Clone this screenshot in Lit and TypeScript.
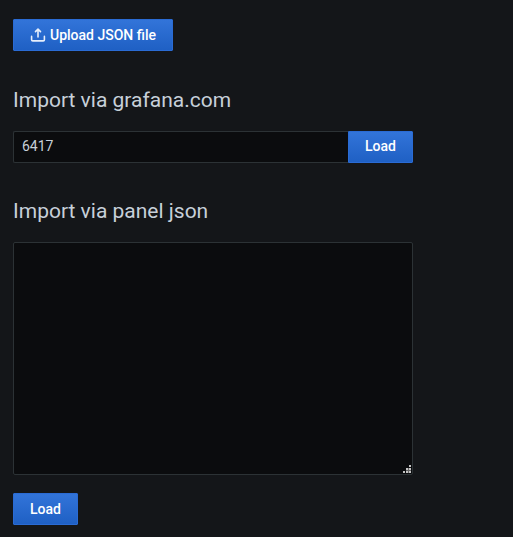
import { LitElement, html, css } from "lit";
import { customElement } from "lit/decorators.js";

@customElement("app-root")
export class AppRoot extends LitElement {
  static styles = css`
    :host {
      display: block;
      box-sizing: border-box;
      height: 537px;
      padding: 19px 13px 0;
      background: #141619;
      color: #c7d0d9;
      font-family: Roboto, "Liberation Sans", sans-serif;
      font-size: 14px;
      overflow: hidden;
    }
    * { box-sizing: border-box; }
    .form { width: 400px; display: flex; flex-direction: column; align-items: flex-start; }
    .btn {
      display: inline-flex;
      align-items: center;
      justify-content: center;
      height: 32px;
      width: 65px;
      padding: 0;
      border: 1px solid #2a6bd4;
      border-radius: 1px;
      background: linear-gradient(180deg, #3274d9 0%, #1f60c4 100%);
      color: #fff;
      font: 500 14px/30px Roboto, "Liberation Sans", sans-serif;
    }
    .upload { width: 160px; }
    .icon { width: 16px; height: 16px; margin-right: 4px; fill: none; stroke: #e6eefb; stroke-width: 1.6; stroke-linecap: round; stroke-linejoin: round; }
    .title { margin: 0; font-size: 21px; font-weight: 400; line-height: 26px; }
    .first { margin-top: 36px; }
    .second { margin-top: 35px; }
    .row { display: flex; width: 100%; margin-top: 18px; }
    .input {
      flex: 1; min-width: 0; height: 32px; padding: 0 8px 2px;
      border: 1px solid #2c3235; border-right: 0; border-radius: 2px 0 0 2px;
      background: #0b0c0e; color: #c7d0d9;
      font: 400 14px/28px Roboto, "Liberation Sans", sans-serif;
    }
    .joined { border-radius: 0 1px 1px 0; padding-bottom: 2px; line-height: 28px; }
    .area {
      display: flex; align-items: flex-end; justify-content: flex-end;
      width: 400px; height: 233px; margin: 18px 0;
      border: 1px solid #2c3235; border-radius: 2px; background: #0b0c0e;
    }
    .grip { width: 10px; height: 10px; }
    .light { fill: #c4c4c4; }
    .dim { fill: #666; }
  `;

  render() {
    return html`
      <main class="form">
        <button class="btn upload">
          <svg class="icon" viewBox="0 0 16 16"><path d="M8 10V2.3M5.5 4.6 8 2.1l2.5 2.5M1.6 9.4v3.3c0 .7.5 1.2 1.2 1.2h10.4c.7 0 1.2-.5 1.2-1.2V9.4" /></svg>
          Upload JSON file
        </button>
        <h2 class="title first">Import via grafana.com</h2>
        <div class="row">
          <input class="input" value="6417" />
          <button class="btn joined">Load</button>
        </div>
        <h2 class="title second">Import via panel json</h2>
        <div class="area">
          <svg class="grip" viewBox="0 0 10 10">
            <path class="dim" d="M4 4h5v5H4z" />
            <path class="light" d="M7 1h2v2H7zM4 4h2v2H4zM7 4h2v2H7zM1 7h2v2H1zM4 7h2v2H4zM7 7h2v2H7z" />
          </svg>
        </div>
        <button class="btn">Load</button>
      </main>
    `;
  }
}
